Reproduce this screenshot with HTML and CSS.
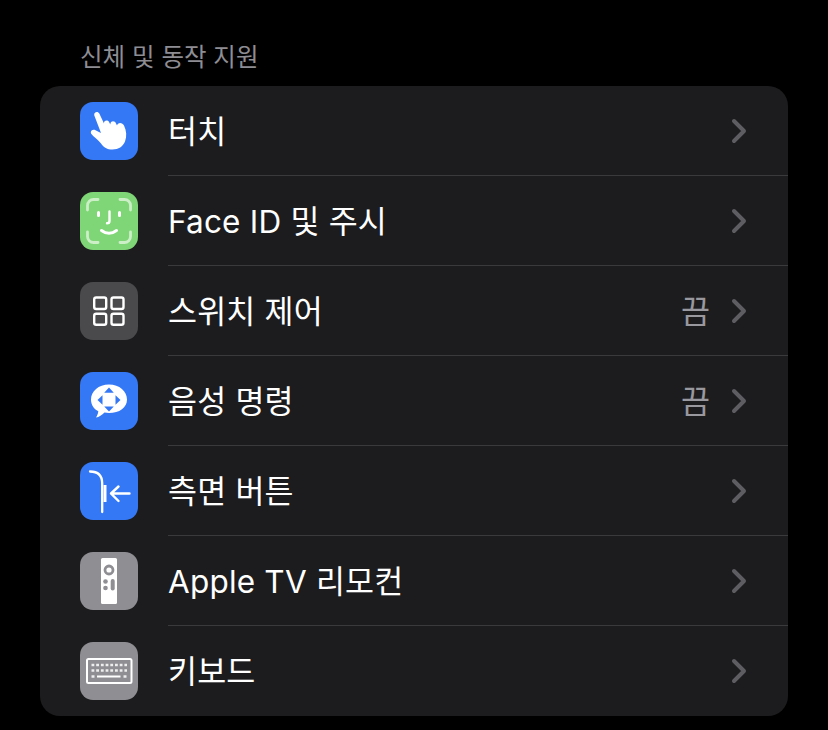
FILE: index.html
```html
<!DOCTYPE html>
<html lang="ko">
<head>
<meta charset="utf-8">
<title>신체 및 동작 지원</title>
<link rel="stylesheet" href="styles.css">
</head>
<body>
<h2 class="section-title">신체 및 동작 지원</h2>
<ul class="card">
  <li class="row">
    <span class="icon blue"><svg viewBox="0 0 58 58"><path d="M11 31.500C10 28.500 13 27 15.500 28.200L21 31L14.300 13.500C13.300 10 18 8.500 19.300 11.500L24 21.500C23.500 18 28.200 17.500 29.300 20.500L30.300 22.500C30.300 18.500 35 18.500 36 21.500L37 23.500C37.500 20 42.500 20 44 23.500C46.500 29 47 34 45 39.500C43 44.500 38.500 47.500 32.500 47.500C27 47.500 24 45.500 21 41.500C18 37.500 13.500 35 11 31.500Z" fill="#fff"/></svg></span>
    <span class="label">터치</span>
    <svg class="chevron" viewBox="0 0 16 26"><path d="M3 3l10 10L3 23"/></svg>
  </li>
  <li class="row">
    <span class="icon green"><svg viewBox="0 0 58 58" fill="none" stroke="#fff" stroke-linecap="round" stroke-linejoin="round"><g stroke-width="2.800" stroke-opacity=".6"><path d="M7.500 18v-4.500a6 6 0 0 1 6-6h4.500M40 7.500h4.500a6 6 0 0 1 6 6v4.500M50.500 40v4.500a6 6 0 0 1-6 6H40M18 50.500h-4.500a6 6 0 0 1-6-6V40"/></g><g stroke-width="3"><path d="M18.500 20.500v3M39.500 20.500v3"/><path d="M29.500 19.500V29c0 1.600-.8 2.300-2.500 2.300" stroke-width="2.400"/><path d="M21.500 38.500c4.500 3.500 10.500 3.500 15 0"/></g></svg></span>
    <span class="label">Face ID 및 주시</span>
    <svg class="chevron" viewBox="0 0 16 26"><path d="M3 3l10 10L3 23"/></svg>
  </li>
  <li class="row">
    <span class="icon dark"><svg viewBox="0 0 58 58" fill="none" stroke="#fff" stroke-width="2.400"><rect x="14.200" y="15.500" width="12" height="11.500" rx="2"/><rect x="31.500" y="15.500" width="12" height="11.500" rx="2"/><rect x="14.200" y="31.800" width="12" height="11" rx="2"/><rect x="31.500" y="31.800" width="12" height="11" rx="2"/></svg></span>
    <span class="label">스위치 제어</span>
    <span class="value">끔</span>
    <svg class="chevron" viewBox="0 0 16 26"><path d="M3 3l10 10L3 23"/></svg>
  </li>
  <li class="row">
    <span class="icon blue"><svg viewBox="0 0 58 58"><path d="M29 12.500c10.500 0 18 6.800 18 15S39.500 41 29 41c-1.600 0-3-.1-4.500-.4-2.500 2.500-5.500 4.600-8.500 5 1-1.500 2-3.600 2.300-6.300C13.800 37 11 33 11 27.500c0-8.200 7.500-15 18-15z" fill="#fff"/><g fill="#3478f6"><path d="M29 15.500l4.800 5.200h-9.600zM29 39.500l-4.800-5h9.600zM17.500 28l5-4.700v9.400zM40.500 28l-5-4.700v9.400z"/></g></svg></span>
    <span class="label">음성 명령</span>
    <span class="value">끔</span>
    <svg class="chevron" viewBox="0 0 16 26"><path d="M3 3l10 10L3 23"/></svg>
  </li>
  <li class="row">
    <span class="icon blue"><svg viewBox="0 0 58 58" fill="none" stroke="#fff" stroke-linecap="round" stroke-linejoin="round"><path d="M10 9.500c6.500 0 12.200 3 12.200 12V50" stroke-width="2.300"/><path d="M25 23v17" stroke-width="3" stroke-linecap="butt"/><path d="M49.500 31.500H31M38.500 24.500l-7.500 7 7.500 7.500" stroke-width="2.400"/></svg></span>
    <span class="label">측면 버튼</span>
    <svg class="chevron" viewBox="0 0 16 26"><path d="M3 3l10 10L3 23"/></svg>
  </li>
  <li class="row">
    <span class="icon gray"><svg viewBox="0 0 58 58"><rect x="21" y="6" width="16" height="46" rx="1.500" fill="#fff"/><circle cx="29" cy="18" r="4" fill="none" stroke="#8e8e93" stroke-width="2.800"/><circle cx="25.500" cy="29.500" r="2.300" fill="#8e8e93"/><circle cx="25.500" cy="36" r="2.300" fill="#8e8e93"/><rect x="30.700" y="27" width="4" height="11.500" rx="2" fill="#8e8e93"/></svg></span>
    <span class="label">Apple TV 리모컨</span>
    <svg class="chevron" viewBox="0 0 16 26"><path d="M3 3l10 10L3 23"/></svg>
  </li>
  <li class="row">
    <span class="icon gray"><svg viewBox="0 0 58 58"><rect x="7" y="17" width="44.500" height="24" rx="1.500" fill="none" stroke="#fff" stroke-width="2"/><path d="M11.500 23h35.500M11.500 28.500h35.500" stroke="#fff" stroke-width="2.600" stroke-dasharray="2.800 1.900" opacity=".85"/><path d="M11.500 34.500h3M43.500 34.500h3" stroke="#fff" stroke-width="2.600" opacity=".85"/><path d="M17 34.500h23.500" stroke="#fff" stroke-width="1.800"/></svg></span>
    <span class="label">키보드</span>
    <svg class="chevron" viewBox="0 0 16 26"><path d="M3 3l10 10L3 23"/></svg>
  </li>
</ul>
</body>
</html>
```
FILE: styles.css
```css
* { box-sizing: border-box; }
html, body { margin: 0; height: 730px; overflow: hidden; }
body {
  background: #000;
  color: #fff;
  font-family: Inter, "Noto Sans CJK KR", sans-serif;
  padding: 0 40px;
}
.section-title {
  margin: 0;
  height: 86px;
  padding: 41px 0 0 40px;
  font-size: 24.500px;
  line-height: 32px;
  font-weight: 400;
  color: #8d8d93;
}
.card {
  list-style: none;
  margin: 0;
  padding: 0;
  width: 748px;
  background: #1c1c1e;
  border-radius: 20px;
  overflow: hidden;
}
.row {
  height: 90px;
  display: flex;
  align-items: center;
  padding: 0 41px 0 40px;
  position: relative;
}
.row + .row::before {
  content: "";
  position: absolute;
  left: 128px;
  right: 0;
  top: -1px;
  height: 1px;
  background: #3a3a3c;
}
.icon {
  width: 58px;
  height: 58px;
  border-radius: 13px;
  flex: none;
  margin-right: 30px;
  display: block;
}
.icon svg { display: block; width: 58px; height: 58px; }
.blue { background: #3478f6; }
.green { background: #7fd676; }
.dark { background: #4a4a4c; }
.gray { background: #8e8e93; }
.label {
  font-size: 31.500px;
  line-height: 42px;
  letter-spacing: .2px;
  padding-top: 2px;
  flex: 1;
  white-space: nowrap;
}
.value {
  font-size: 31.500px;
  line-height: 42px;
  padding-top: 2px;
  color: #98989e;
  margin-right: 21px;
}
.chevron {
  width: 16px;
  height: 26px;
  flex: none;
  fill: none;
  stroke: #5e5e62;
  stroke-width: 4;
  stroke-linecap: round;
  stroke-linejoin: round;
}
```
